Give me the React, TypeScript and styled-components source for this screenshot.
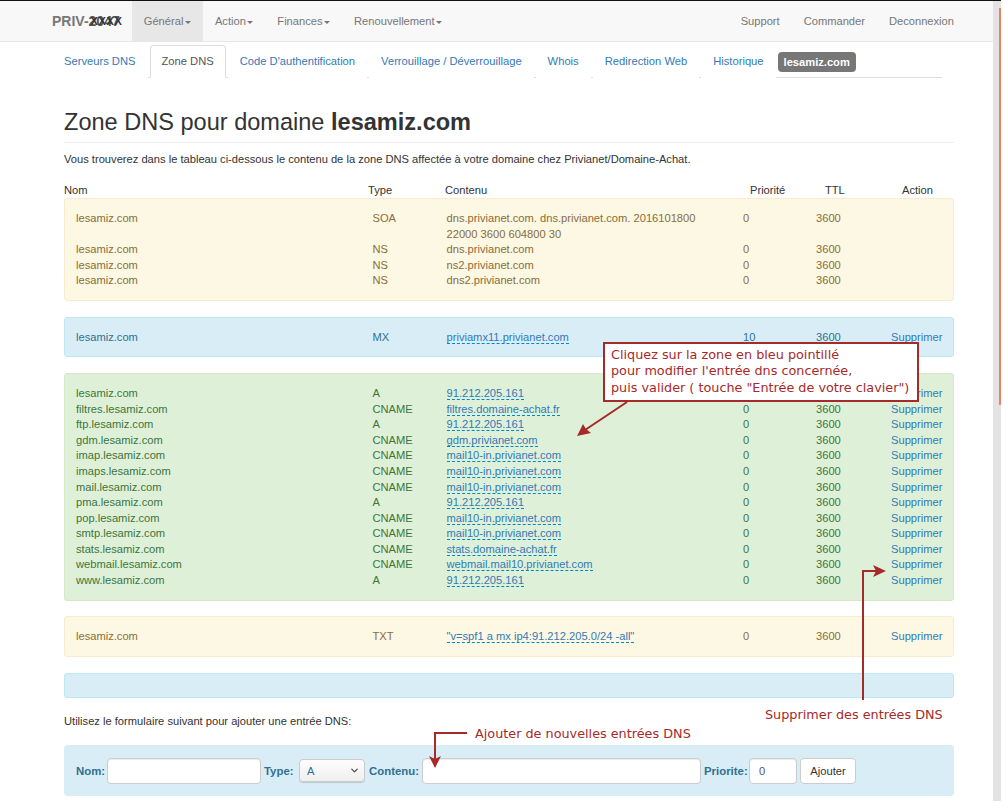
import styled, { createGlobalStyle } from 'styled-components';
import { ChevronDown } from 'lucide-react';

const GlobalStyle = createGlobalStyle`
  html, body {
    margin: 0;
    padding: 0;
    height: 803px;
    overflow: hidden;
    background: #fff;
    font-family: "Liberation Sans", Arial, sans-serif;
    font-size: 11.15px;
    color: #333;
  }
  * { box-sizing: border-box; }
`;

const Screen = styled.div`
  width: 1001px;
  height: 801px;
  border-top: 1px solid #111;
  display: flex;
`;

const Main = styled.div`
  position: relative;
  width: 993px;
  height: 800px;
  overflow: hidden;
`;

const ScrollTrack = styled.div`
  width: 8px;
  height: 800px;
  background: #e3e3e3;
  padding-top: 7px;
  display: flex;
  justify-content: flex-end;
`;

const ScrollThumb = styled.div`
  width: 2px;
  height: 397px;
  background: #f0845c;
`;

const NavBar = styled.nav`
  height: 41px;
  background: #f8f8f8;
  border-bottom: 1px solid #e7e7e7;
  display: flex;
  padding: 0 27px 0 52px;
`;

const Brand = styled.a`
  font-size: 14px;
  font-weight: bold;
  color: #777;
  line-height: 40px;
  padding-right: 12px;
`;

const Scribble = styled.span`
  position: relative;
  color: #555;

  &::after {
    content: "XXXX";
    position: absolute;
    left: 2px;
    top: 2px;
    font-size: 11px;
    line-height: 12px;
    letter-spacing: 0.6px;
    color: #333;
  }
`;

const NavItem = styled.a<{ $active?: boolean }>`
  color: #777;
  line-height: 40px;
  padding: 0 12px;
  background: ${props => (props.$active ? '#e7e7e7' : 'transparent')};
`;

const Caret = styled.span`
  display: inline-block;
  margin-left: 1.5px;
  vertical-align: middle;
  border-top: 3px solid;
  border-left: 3px solid transparent;
  border-right: 3px solid transparent;
`;

const NavRight = styled.div`
  margin-left: auto;
  display: flex;
`;

const Content = styled.div`
  padding: 0 39px 0 64px;
`;

const Tabs = styled.ul`
  list-style: none;
  margin: 3px 12px 0 -12px;
  padding: 0;
  height: 33px;
  border-bottom: 1px solid #ddd;
  display: flex;
  gap: 2px;
`;

const Tab = styled.li<{ $active?: boolean }>`
  height: 33px;
  padding: 7px 11px;
  font-size: 11.2px;
  line-height: 16px;
  color: ${props => (props.$active ? '#555' : '#337ab7')};
  background: #fff;
  border: 1px solid ${props => (props.$active ? '#ddd' : 'transparent')};
  border-bottom-color: ${props => (props.$active ? '#fff' : 'transparent')};
  border-radius: 4px 4px 0 0;
`;

const DomainLabel = styled.li`
  align-self: flex-start;
  margin-top: 7px;
  height: 20px;
  line-height: 20px;
  padding: 0 6px;
  background: #777;
  color: #fff;
  font-weight: bold;
  font-size: 11.15px;
  border-radius: 4px;
`;

const PageHeader = styled.div`
  margin-top: 29px;
  padding-bottom: 5px;
  border-bottom: 1px solid #eee;
`;

const Title = styled.h1`
  margin: 0;
  font-size: 23.56px;
  font-weight: 500;
  line-height: 30px;
  color: #333;
`;

const Text = styled.p`
  margin: 8px 0 0;
  line-height: 16px;
`;

const HeadRow = styled.div`
  margin-top: 15px;
  height: 16px;
  line-height: 16px;
  display: grid;
  grid-template-columns: 304px 77px 305px 75px 77px 1fr;
`;

const Panel = styled.div<{ $tone: 'warning' | 'info' | 'success' }>`
  margin-bottom: 15.7px;
  padding: 12px 11px 11px;
  border: 1px solid;
  border-radius: 3px;
  min-height: 25px;
  background: ${props => ({ warning: '#fcf8e3', info: '#d9edf7', success: '#dff0d8' }[props.$tone])};
  border-color: ${props => ({ warning: '#faebcc', info: '#bce8f1', success: '#d6e9c6' }[props.$tone])};
  color: ${props => ({ warning: '#8a6d3b', info: '#31708f', success: '#3c763d' }[props.$tone])};
`;

const Row = styled.div`
  display: grid;
  grid-template-columns: 296.5px 74px 296.5px 73px 75px 1fr;
  line-height: 15.6px;
`;

const Editable = styled.span`
  color: #337ab7;
  border-bottom: 1px dashed #08c;
`;

const Plain = styled.span`
  display: block;
  max-width: 270px;
`;

const DeleteLink = styled.a`
  color: #337ab7;
`;

const FormIntro = styled.p`
  margin: 0;
  line-height: 16px;
`;

const AddForm = styled.form`
  margin-top: 16px;
  height: 51px;
  padding: 0 0 0 11px;
  background: #d9edf7;
  border: 1px solid #d9edf7;
  border-radius: 3px;
  display: flex;
  align-items: center;
  gap: 3px;
`;

const FieldLabel = styled.label<{ $width: number }>`
  width: ${props => props.$width}px;
  font-size: 11.4px;
  font-weight: bold;
  white-space: nowrap;
  color: #31708f;
`;

const Input = styled.input<{ $width: number }>`
  width: ${props => props.$width}px;
  height: 26px;
  padding: 0 9px;
  border: 1px solid #ccc;
  border-radius: 4px;
  background: #fff;
  font: 11.15px "Liberation Sans", Arial, sans-serif;
  color: #555;
  box-shadow: inset 0 1px 1px rgba(0, 0, 0, 0.075);
  outline: none;
`;

const SelectWrap = styled.div`
  position: relative;
  width: 66px;
  height: 23px;
  margin-right: 1px;

  svg {
    position: absolute;
    right: 5px;
    top: 6px;
    color: #444;
    pointer-events: none;
  }
`;

const Select = styled.select`
  appearance: none;
  width: 100%;
  height: 100%;
  padding: 0 7px;
  border: 1px solid #ccc;
  border-radius: 4px;
  background: linear-gradient(#fdfdfd, #efefef);
  box-shadow: 0 1px 1px rgba(0, 0, 0, 0.15);
  font: 11.15px "Liberation Sans", Arial, sans-serif;
  color: #31708f;
`;

const AddButton = styled.button`
  width: 56px;
  height: 26px;
  padding: 0;
  border: 1px solid #ccc;
  border-radius: 4px;
  background: #fff;
  font: 11.15px "Liberation Sans", Arial, sans-serif;
  color: #333;
`;

const Callout = styled.div`
  position: absolute;
  left: 603px;
  top: 341px;
  width: 316px;
  height: 60px;
  padding: 3px 0 0 6px;
  background: #fff;
  border: 2px solid #a52a2a;
  color: #a52a2a;
  font-family: "DejaVu Sans", sans-serif;
  font-size: 12.8px;
  line-height: 16.4px;
  white-space: nowrap;
`;

const Note = styled.span<{ $left: number; $top: number }>`
  position: absolute;
  left: ${props => props.$left}px;
  top: ${props => props.$top}px;
  color: #a52a2a;
  font-family: "DejaVu Sans", sans-serif;
  font-size: 12.8px;
  line-height: 16px;
  white-space: nowrap;
`;

const Arrow = styled.svg<{ $left: number; $top: number }>`
  position: absolute;
  left: ${props => props.$left}px;
  top: ${props => props.$top}px;
  overflow: visible;
`;

type Entry = { name: string; type: string; content: string; prio?: string };

const soa: Entry[] = [
  { name: 'lesamiz.com', type: 'SOA', content: 'dns.privianet.com. dns.privianet.com. 2016101800 22000 3600 604800 30' },
  { name: 'lesamiz.com', type: 'NS', content: 'dns.privianet.com' },
  { name: 'lesamiz.com', type: 'NS', content: 'ns2.privianet.com' },
  { name: 'lesamiz.com', type: 'NS', content: 'dns2.privianet.com' },
];

const hosts: [string, string, string][] = [
  ['lesamiz.com', 'A', '91.212.205.161'],
  ['filtres.lesamiz.com', 'CNAME', 'filtres.domaine-achat.fr'],
  ['ftp.lesamiz.com', 'A', '91.212.205.161'],
  ['gdm.lesamiz.com', 'CNAME', 'gdm.privianet.com'],
  ['imap.lesamiz.com', 'CNAME', 'mail10-in.privianet.com'],
  ['imaps.lesamiz.com', 'CNAME', 'mail10-in.privianet.com'],
  ['mail.lesamiz.com', 'CNAME', 'mail10-in.privianet.com'],
  ['pma.lesamiz.com', 'A', '91.212.205.161'],
  ['pop.lesamiz.com', 'CNAME', 'mail10-in.privianet.com'],
  ['smtp.lesamiz.com', 'CNAME', 'mail10-in.privianet.com'],
  ['stats.lesamiz.com', 'CNAME', 'stats.domaine-achat.fr'],
  ['webmail.lesamiz.com', 'CNAME', 'webmail.mail10.privianet.com'],
  ['www.lesamiz.com', 'A', '91.212.205.161'],
];

const EditableRow = ({ name, type, content, prio = '0' }: Entry) => (
  <Row>
    <span>{name}</span>
    <span>{type}</span>
    <span><Editable>{content}</Editable></span>
    <span>{prio}</span>
    <span>3600</span>
    <DeleteLink>Supprimer</DeleteLink>
  </Row>
);

export default function App() {
  return (
    <>
      <GlobalStyle />
      <Screen>
        <Main>
          <NavBar>
            <Brand>PRIV-<Scribble>2047</Scribble></Brand>
            <NavItem $active>Général<Caret /></NavItem>
            <NavItem>Action<Caret /></NavItem>
            <NavItem>Finances<Caret /></NavItem>
            <NavItem>Renouvellement<Caret /></NavItem>
            <NavRight>
              <NavItem>Support</NavItem>
              <NavItem>Commander</NavItem>
              <NavItem>Deconnexion</NavItem>
            </NavRight>
          </NavBar>
          <Content>
            <Tabs>
              <Tab>Serveurs DNS</Tab>
              <Tab $active>Zone DNS</Tab>
              <Tab>Code D'authentification</Tab>
              <Tab>Verrouillage / Déverrouillage</Tab>
              <Tab>Whois</Tab>
              <Tab>Redirection Web</Tab>
              <Tab>Historique</Tab>
              <DomainLabel>lesamiz.com</DomainLabel>
            </Tabs>
            <PageHeader>
              <Title>Zone DNS pour domaine <b>lesamiz.com</b></Title>
            </PageHeader>
            <Text>Vous trouverez dans le tableau ci-dessous le contenu de la zone DNS affectée à votre domaine chez Privianet/Domaine-Achat.</Text>
            <HeadRow>
              <span>Nom</span>
              <span>Type</span>
              <span>Contenu</span>
              <span>Priorité</span>
              <span>TTL</span>
              <span>Action</span>
            </HeadRow>
            <Panel $tone="warning">
              {soa.map(e => (
                <Row key={e.content}>
                  <span>{e.name}</span>
                  <span>{e.type}</span>
                  <Plain>{e.content}</Plain>
                  <span>0</span>
                  <span>3600</span>
                </Row>
              ))}
            </Panel>
            <Panel $tone="info">
              <EditableRow name="lesamiz.com" type="MX" content="priviamx11.privianet.com" prio="10" />
            </Panel>
            <Panel $tone="success">
              {hosts.map(([name, type, content]) => (
                <EditableRow key={name} name={name} type={type} content={content} />
              ))}
            </Panel>
            <Panel $tone="warning">
              <EditableRow name="lesamiz.com" type="TXT" content={'"v=spf1 a mx ip4:91.212.205.0/24 -all"'} />
            </Panel>
            <Panel $tone="info" />
            <FormIntro>Utilisez le formulaire suivant pour ajouter une entrée DNS:</FormIntro>
            <AddForm>
              <FieldLabel $width={28}>Nom:</FieldLabel>
              <Input $width={154} />
              <FieldLabel $width={32}>Type:</FieldLabel>
              <SelectWrap>
                <Select defaultValue="A">
                  <option>A</option>
                </Select>
                <ChevronDown size={11} strokeWidth={2.5} />
              </SelectWrap>
              <FieldLabel $width={50}>Contenu:</FieldLabel>
              <Input $width={279} />
              <FieldLabel $width={42}>Priorite:</FieldLabel>
              <Input $width={48} defaultValue="0" />
              <AddButton type="button">Ajouter</AddButton>
            </AddForm>
          </Content>

          <Callout>
            Cliquez sur la zone en bleu pointillé<br />
            pour modifier l'entrée dns concernée,<br />
            puis valider ( touche "Entrée de votre clavier")
          </Callout>
          <Arrow $left={570} $top={399} width="62" height="40" fill="#a52a2a" stroke="none">
            <path d="M57 2 L12 32" stroke="#a52a2a" strokeWidth="2" />
            <polygon points="7,36 13,24 16,29 21,33" />
          </Arrow>
          <Arrow $left={855} $top={559} width="40" height="142" fill="#a52a2a" stroke="none">
            <path d="M8 140 V11 H22" stroke="#a52a2a" strokeWidth="2" fill="none" />
            <polygon points="31,11 18,5 21,11 18,17" />
          </Arrow>
          <Arrow $left={425} $top={724} width="50" height="50" fill="#a52a2a" stroke="none">
            <path d="M42 8 H10 V34" stroke="#a52a2a" strokeWidth="2" fill="none" />
            <polygon points="10,43 4,31 10,34 16,31" />
          </Arrow>
          <Note $left={765} $top={706}>Supprimer des entrées DNS</Note>
          <Note $left={475} $top={725}>Ajouter de nouvelles entrées DNS</Note>
        </Main>
        <ScrollTrack>
          <ScrollThumb />
        </ScrollTrack>
      </Screen>
    </>
  );
}
